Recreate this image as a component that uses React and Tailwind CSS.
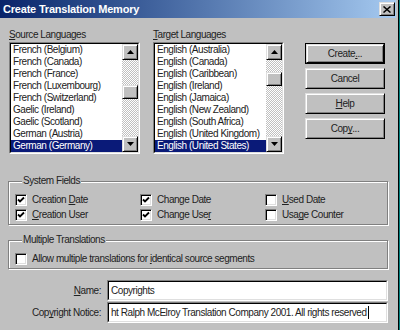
import React from "react";

const sourceLangs = [
    "French (Belgium)",
    "French (Canada)",
    "French (France)",
    "French (Luxembourg)",
    "French (Switzerland)",
    "Gaelic (Ireland)",
    "Gaelic (Scotland)",
    "German (Austria)",
    "German (Germany)",
];

const targetLangs = [
    "English (Australia)",
    "English (Canada)",
    "English (Caribbean)",
    "English (Ireland)",
    "English (Jamaica)",
    "English (New Zealand)",
    "English (South Africa)",
    "English (United Kingdom)",
    "English (United States)",
];

const raised =
    "border border-t-[#dfdfdf] border-l-[#dfdfdf] border-b-black border-r-black shadow-[inset_1px_1px_0_#fff,inset_-1px_-1px_0_#808080]";

const ScrollBtn = ({ down }) => (
    <div className={`w-[16px] h-[16px] bg-[#c0c0c0] flex items-center justify-center ${raised}`}>
        <svg width="7" height="4" viewBox="0 0 7 4">
            {down ? <path d="M0 0h7L3.5 4z" fill="#000" /> : <path d="M0 4h7L3.5 0z" fill="#000" />}
        </svg>
    </div>
);

const ListBox = ({ items, thumb }) => (
    <div className="w-[131px] h-[112px] border border-t-[#808080] border-l-[#808080] border-b-white border-r-white">
        <div className="h-full flex bg-white border border-t-black border-l-black border-b-[#dfdfdf] border-r-[#dfdfdf]">
            <div className="flex-1 overflow-hidden">
                {items.map((it, i) => (
                    <div
                        key={it}
                        className={`h-[12px] leading-[12px] pl-[2px] whitespace-nowrap ${
                            i === items.length - 1 ? "bg-[#0a1a78] text-white" : ""
                        }`}
                    >
                        {it}
                    </div>
                ))}
            </div>
            <div className="w-[16px] flex flex-col bg-[conic-gradient(#c0c0c0_25%,#fff_0_50%,#c0c0c0_0_75%,#fff_0)] bg-[length:2px_2px]">
                <ScrollBtn />
                <div className={`w-[16px] h-[14px] bg-[#c0c0c0] ${raised} ${thumb}`} />
                <div className="flex-1" />
                <ScrollBtn down />
            </div>
        </div>
    </div>
);

const Button = ({ children, primary }) => {
    const inner = (
        <div className={`h-full bg-[#c0c0c0] flex items-center justify-center ${raised}`}>{children}</div>
    );
    return primary ? (
        <div className="w-[80px] h-[21px] border border-black">{inner}</div>
    ) : (
        <div className="w-[80px] h-[21px]">{inner}</div>
    );
};

const Check = ({ checked, children }) => (
    <div className="h-[15px] flex items-center whitespace-nowrap">
        <div className="w-[12px] h-[12px] bg-white flex items-center justify-center border border-t-[#808080] border-l-[#808080] border-b-white border-r-white shadow-[inset_1px_1px_0_#000,inset_-1px_-1px_0_#dfdfdf]">
            {checked && (
                <svg width="8" height="8" viewBox="0 0 8 8">
                    <polyline points="1,3.5 3,5.5 7,1.5" fill="none" stroke="#000" strokeWidth="1.8" />
                </svg>
            )}
        </div>
        <span className="ml-[5px]">{children}</span>
    </div>
);

const field =
    "h-[21px] border border-t-[#808080] border-l-[#808080] border-b-white border-r-white";
const fieldInner =
    "h-full bg-white flex items-center px-[2px] overflow-hidden whitespace-nowrap border border-t-black border-l-black border-b-[#dfdfdf] border-r-[#dfdfdf]";

export default function App() {
    return (
        <div className="w-[400px] h-[330px] flex bg-[#008080] overflow-hidden font-['Liberation_Sans',Arial,sans-serif] text-[10px] tracking-[-0.45px] text-[#222] [text-decoration-skip-ink:none]">
            <div className="w-[399px] h-full flex flex-col bg-[#c0c0c0] border-r border-black">
                {/* title bar */}
                <div className="h-[18px] mr-[2px] flex items-center pl-[3px] pr-[1px] bg-linear-to-r from-[#0a246a] to-[#a6caf0]">
                    <span className="text-white font-bold text-[11px] tracking-[-0.2px]">Create Translation Memory</span>
                    <div className={`ml-auto w-[16px] h-[14px] bg-[#c0c0c0] flex items-center justify-center ${raised}`}>
                        <svg width="8" height="7" viewBox="0 0 8 7">
                            <path d="M0.5 0.5L7.5 6.5M7.5 0.5L0.5 6.5" stroke="#000" strokeWidth="1.5" />
                        </svg>
                    </div>
                </div>

                <div className="flex-1 px-[8px] pr-[9px]">
                    {/* lists + buttons */}
                    <div className="mt-[11px] flex items-start">
                        <div className="ml-[1px] flex flex-col">
                            <div className="h-[13px] leading-[12px]">
                                <u>S</u>ource Languages
                            </div>
                            <ListBox items={sourceLangs} thumb="mt-[25px]" />
                        </div>
                        <div className="ml-[13px] flex flex-col">
                            <div className="h-[13px] leading-[12px]">
                                <u>T</u>arget Languages
                            </div>
                            <ListBox items={targetLangs} thumb="mt-[12px]" />
                        </div>
                        <div className="ml-[21px] mt-[14px] flex flex-col gap-[4px]">
                            <Button primary>
                                Create<u>.</u>..
                            </Button>
                            <Button>Cancel</Button>
                            <Button>
                                <u>H</u>elp
                            </Button>
                            <Button>
                                Cop<u>y</u>...
                            </Button>
                        </div>
                    </div>

                    {/* system fields */}
                    <fieldset className="mt-[21px] w-[380px] border border-[#808080] shadow-[1px_1px_0_#fff,inset_1px_1px_0_#fff] pl-[6px] pt-[5px] pb-[2px]">
                        <legend className="ml-[7px] px-[1px] leading-[12px] bg-[#c0c0c0]">System Fields</legend>
                        <div className="grid grid-cols-[125px_125px_1fr]">
                            <Check checked>
                                Creation <u>D</u>ate
                            </Check>
                            <Check checked>Change Date</Check>
                            <Check>
                                <u>U</u>sed Date
                            </Check>
                            <Check checked>
                                <u>C</u>reation User
                            </Check>
                            <Check checked>
                                Change Use<u>r</u>
                            </Check>
                            <Check>
                                Usa<u>g</u>e Counter
                            </Check>
                        </div>
                    </fieldset>

                    {/* multiple translations */}
                    <fieldset className="mt-[9px] w-[380px] border border-[#808080] shadow-[1px_1px_0_#fff,inset_1px_1px_0_#fff] pl-[6px] pt-[5px] pb-[2px]">
                        <legend className="ml-[7px] px-[1px] leading-[12px] bg-[#c0c0c0]">Multiple Translations</legend>
                        <Check>
                            Allow multiple translations for <u>i</u>dentical source segments
                        </Check>
                    </fieldset>

                    {/* name + notice */}
                    <div className="mt-[11px] grid grid-cols-[93px_281px] gap-x-[6px] gap-y-[1px] items-center">
                        <div className="text-right">
                            <u>N</u>ame:
                        </div>
                        <div className={field}>
                            <div className={fieldInner}>Copyrights</div>
                        </div>
                        <div className="text-right whitespace-nowrap">
                            Cop<u>y</u>right Notice:
                        </div>
                        <div className={field}>
                            <div className={fieldInner}>
                                <span>ht Ralph McElroy Translation Company 2001. All rights reserved</span>
                                <span className="w-px h-[13px] bg-black ml-px shrink-0" />
                            </div>
                        </div>
                    </div>
                </div>
            </div>
        </div>
    );
}
